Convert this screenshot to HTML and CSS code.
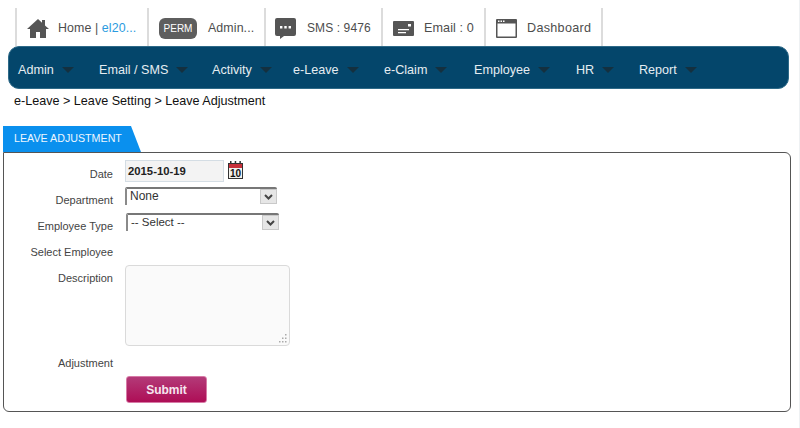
FILE: index.html
```html
<!DOCTYPE html>
<html lang="en">
<head>
<meta charset="utf-8">
<title>Leave Adjustment</title>
<link rel="stylesheet" href="styles.css">
</head>
<body>
<div class="page">
  <header class="topbar">
    <div class="top-item w-home">
      <svg class="ico" width="22" height="20" viewBox="0 0 22 20"><path fill="#555" d="M11 1 0 11h3v9h6v-6h4v6h6v-9h3l-4-3.6V2h-3v2.7z"/></svg>
      <span>Home | <a class="user">el20...</a></span>
    </div>
    <div class="top-item w-perm">
      <span class="perm">PERM</span>
      <span>Admin...</span>
    </div>
    <div class="top-item w-sms">
      <svg class="ico" width="21" height="21" viewBox="0 0 21 21"><path fill="#555" d="M2 0h17a2 2 0 0 1 2 2v14a2 2 0 0 1-2 2H9l-4 3v-3H2a2 2 0 0 1-2-2V2a2 2 0 0 1 2-2z"/><path fill="#fff" d="M5 8h2.4v2.4H5zM9.3 8h2.4v2.4H9.3zM13.6 8H16v2.4h-2.400z"/></svg>
      <span>SMS : 9476</span>
    </div>
    <div class="top-item w-email">
      <svg class="ico" width="21" height="15" viewBox="0 0 21 15"><path fill="#555" d="M1 0h19a1 1 0 0 1 1 1v13a1 1 0 0 1-1 1H1a1 1 0 0 1-1-1V1a1 1 0 0 1 1-1z"/><path fill="#fff" d="M15 3h3v2.500h-3zM5 8h11v1.300H5zM5 11h8v1.300H5z"/></svg>
      <span>Email : 0</span>
    </div>
    <div class="top-item w-dash">
      <svg class="ico" width="21" height="19" viewBox="0 0 21 19"><path fill="#555" d="M1 0h19a1 1 0 0 1 1 1v17a1 1 0 0 1-1 1H1a1 1 0 0 1-1-1V1a1 1 0 0 1 1-1zm.5 4.500v13h18v-13z"/><path fill="#fff" d="M2 1.500h1.500V3H2zM4.500 1.500H6V3H4.500zM7 1.500h1.500V3H7z"/></svg>
      <span>Dashboard</span>
    </div>
  </header>

  <nav class="menu">
    <span class="menu-item m1">Admin<i class="caret"></i></span>
    <span class="menu-item m2">Email / SMS<i class="caret"></i></span>
    <span class="menu-item m3">Activity<i class="caret"></i></span>
    <span class="menu-item m4">e-Leave<i class="caret"></i></span>
    <span class="menu-item m5">e-Claim<i class="caret"></i></span>
    <span class="menu-item m6">Employee<i class="caret"></i></span>
    <span class="menu-item m7">HR<i class="caret"></i></span>
    <span class="menu-item m8">Report<i class="caret"></i></span>
  </nav>

  <div class="crumbs">e-Leave &gt; Leave Setting &gt; Leave Adjustment</div>

  <div class="tab">LEAVE ADJUSTMENT</div>
  <section class="panel">
    <form class="form">
      <label class="lbl r-date">Date</label>
      <div class="ctl date-ctl">
        <div class="date-input">2015-10-19</div>
        <svg class="cal" width="15" height="18" viewBox="0 0 15 18">
          <rect x="0" y="2" width="15" height="16" fill="#333"/>
          <rect x="1" y="3" width="13" height="4" fill="#c8303a"/>
          <path fill="#333" d="M2 0h1.500v3H2zM6.700 0h1.500v3H6.700zM11.400 0h1.500v3h-1.500z"/>
          <rect x="1" y="7" width="13" height="10" fill="#f2f2ee"/>
          <text class="cal-num" x="7.500" y="16">10</text>
        </svg>
      </div>

      <label class="lbl r-dept">Department</label>
      <div class="ctl">
        <div class="select sel-dept"><span>None</span><i class="sel-btn"><svg width="9" height="6" viewBox="0 0 9 6"><path fill="none" stroke="#444" stroke-width="2" d="M1 1l3.500 3.500L8 1"/></svg></i></div>
      </div>

      <label class="lbl r-type">Employee Type</label>
      <div class="ctl">
        <div class="select sel-type"><span>-- Select --</span><i class="sel-btn"><svg width="9" height="6" viewBox="0 0 9 6"><path fill="none" stroke="#444" stroke-width="2" d="M1 1l3.500 3.500L8 1"/></svg></i></div>
      </div>

      <label class="lbl r-emp">Select Employee</label>
      <div class="ctl"></div>

      <label class="lbl r-desc">Description</label>
      <div class="ctl">
        <div class="textarea">
          <svg class="grip" width="9" height="9" viewBox="0 0 9 9"><path fill="#aaa" d="M7 0h1.500v1.500H7zM4 3.500h1.500V5H4zM7 3.500h1.500V5H7zM1 7h1.500v1.500H1zM4 7h1.500v1.500H4zM7 7h1.500v1.500H7z"/></svg>
        </div>
      </div>

      <label class="lbl r-adj">Adjustment</label>
      <div class="ctl"></div>

      <div class="submit-cell"><button type="button" class="submit">Submit</button></div>
    </form>
  </section>
</div>
</body>
</html>
```

FILE: styles.css
```css
* { box-sizing: border-box; }
html, body { margin: 0; padding: 0; background: #fff; }
body { font-family: "Liberation Sans", Arial, sans-serif; font-size: 12px; color: #444; }
.page { width: 800px; height: 428px; overflow: hidden; border-right: 1px solid #eef1f3; padding-top: 8px; }

.topbar { display: flex; height: 38px; margin-left: 15px; }
.top-item { display: flex; align-items: center; border-left: 2px solid #dcdcdc; font-size: 12.4px; color: #4d4d4d; letter-spacing: 0.1px; padding-top: 2px; }
.w-dash { border-right: 2px solid #dcdcdc; }
.w-home { width: 132px; padding-left: 10px; gap: 9px; }
.w-perm { width: 117px; padding-left: 10px; gap: 11px; }
.w-sms { width: 117px; padding-left: 9px; gap: 11px; font-size: 12px; }
.w-email { width: 103px; padding-left: 10px; gap: 10px; font-size: 12.6px; }
.w-dash { width: 119px; padding-left: 10px; gap: 10px; font-size: 12.6px; letter-spacing: 0.3px; }
.ico { flex: none; }
.user { color: #2a9be0; }
.perm { background: #5e5e5e; color: #fff; border-radius: 6px; width: 38px; height: 21px; font-size: 10px; line-height: 21px; text-align: center; letter-spacing: 0; }

.menu { display: flex; align-items: center; height: 43px; padding-top: 4px; margin: 0 10px 0 8px; background: #04466b; border: 1px solid #2e6a88; border-radius: 11px; color: #e6edf1; font-size: 12.6px; }
.menu-item { display: flex; align-items: center; gap: 8px; }
.caret { width: 0; height: 0; border-style: solid; border-width: 6px 6px 0; border-color: #14303f transparent transparent; margin-top: 1px; }
.m1 { margin-left: 9px; width: 81px; }
.m2 { width: 113px; }
.m3 { width: 81px; }
.m4 { width: 91px; }
.m5 { width: 90px; }
.m6 { width: 102px; }
.m7 { width: 63px; }
.m8 { width: 80px; }

.crumbs { margin: 5px 0 0 14px; height: 14px; font-size: 12.6px; line-height: 14px; color: #111; }

.tab { width: 138px; height: 26px; margin: 18px 0 0 3px; padding-left: 11px; background: #0a90ee; color: #eef7fe; font-size: 10.7px; line-height: 25px; clip-path: polygon(0 0, 128px 0, 138px 100%, 0 100%); }

.panel { height: 260px; margin: 0 8px 0 3px; border: 1px solid #555; border-radius: 0 6px 6px 6px; padding-top: 7px; }
.form { display: grid; grid-template-columns: 109px 1fr; column-gap: 12px; grid-template-rows: 23px 26px 26px 26px 88px 27px 27px; }
.lbl { text-align: right; font-size: 11px; line-height: 14px; color: #444; padding-top: 7px; }
.r-dept { padding-top: 10px; }
.r-type { padding-top: 10px; }
.r-emp { padding-top: 10px; }
.r-desc { padding-top: 10px; }
.r-adj { padding-top: 7px; }
.ctl { min-width: 0; }
.date-ctl { display: flex; align-items: flex-start; gap: 4px; }
.date-input { width: 99px; height: 22px; background: #f3f3f3; border: 1px solid #d4dde4; font-size: 11.3px; font-weight: bold; color: #222; line-height: 20px; padding-left: 2px; }
.cal { flex: none; margin-top: 1px; }
.cal-num { font-family: "Liberation Sans", Arial, sans-serif; font-size: 10px; font-weight: bold; text-anchor: middle; fill: #111; }

.select { display: flex; justify-content: space-between; height: 18px; border-top: 2px solid #777; border-left: 2px solid #8a8a8a; border-radius: 2px 2px 0 0; font-size: 12px; line-height: 15px; color: #333; padding-left: 3px; background: #fff; position: relative; top: 4px; }
.sel-dept { width: 152px; }
.sel-type { width: 153px; margin-left: 1px; font-size: 11.5px; }
.sel-btn { display: flex; align-items: center; justify-content: center; width: 17px; height: 15px; background: #e6e6e6; border: 1px solid #c9c9c9; }

.textarea { position: relative; width: 165px; height: 81px; margin-top: 4px; background: #fafafa; border: 1px solid #dadada; border-radius: 4px; }
.grip { position: absolute; right: 2px; bottom: 2px; }

.submit-cell { grid-column: 2; }
.submit { display: block; width: 81px; height: 27px; margin-left: 1px; padding: 0; border: 1px solid #d77aa6; border-radius: 3px; background: linear-gradient(#b33a78, #ae0e56); color: #f6e6ef; font-family: "Liberation Sans", Arial, sans-serif; font-size: 12px; font-weight: bold; }
```
